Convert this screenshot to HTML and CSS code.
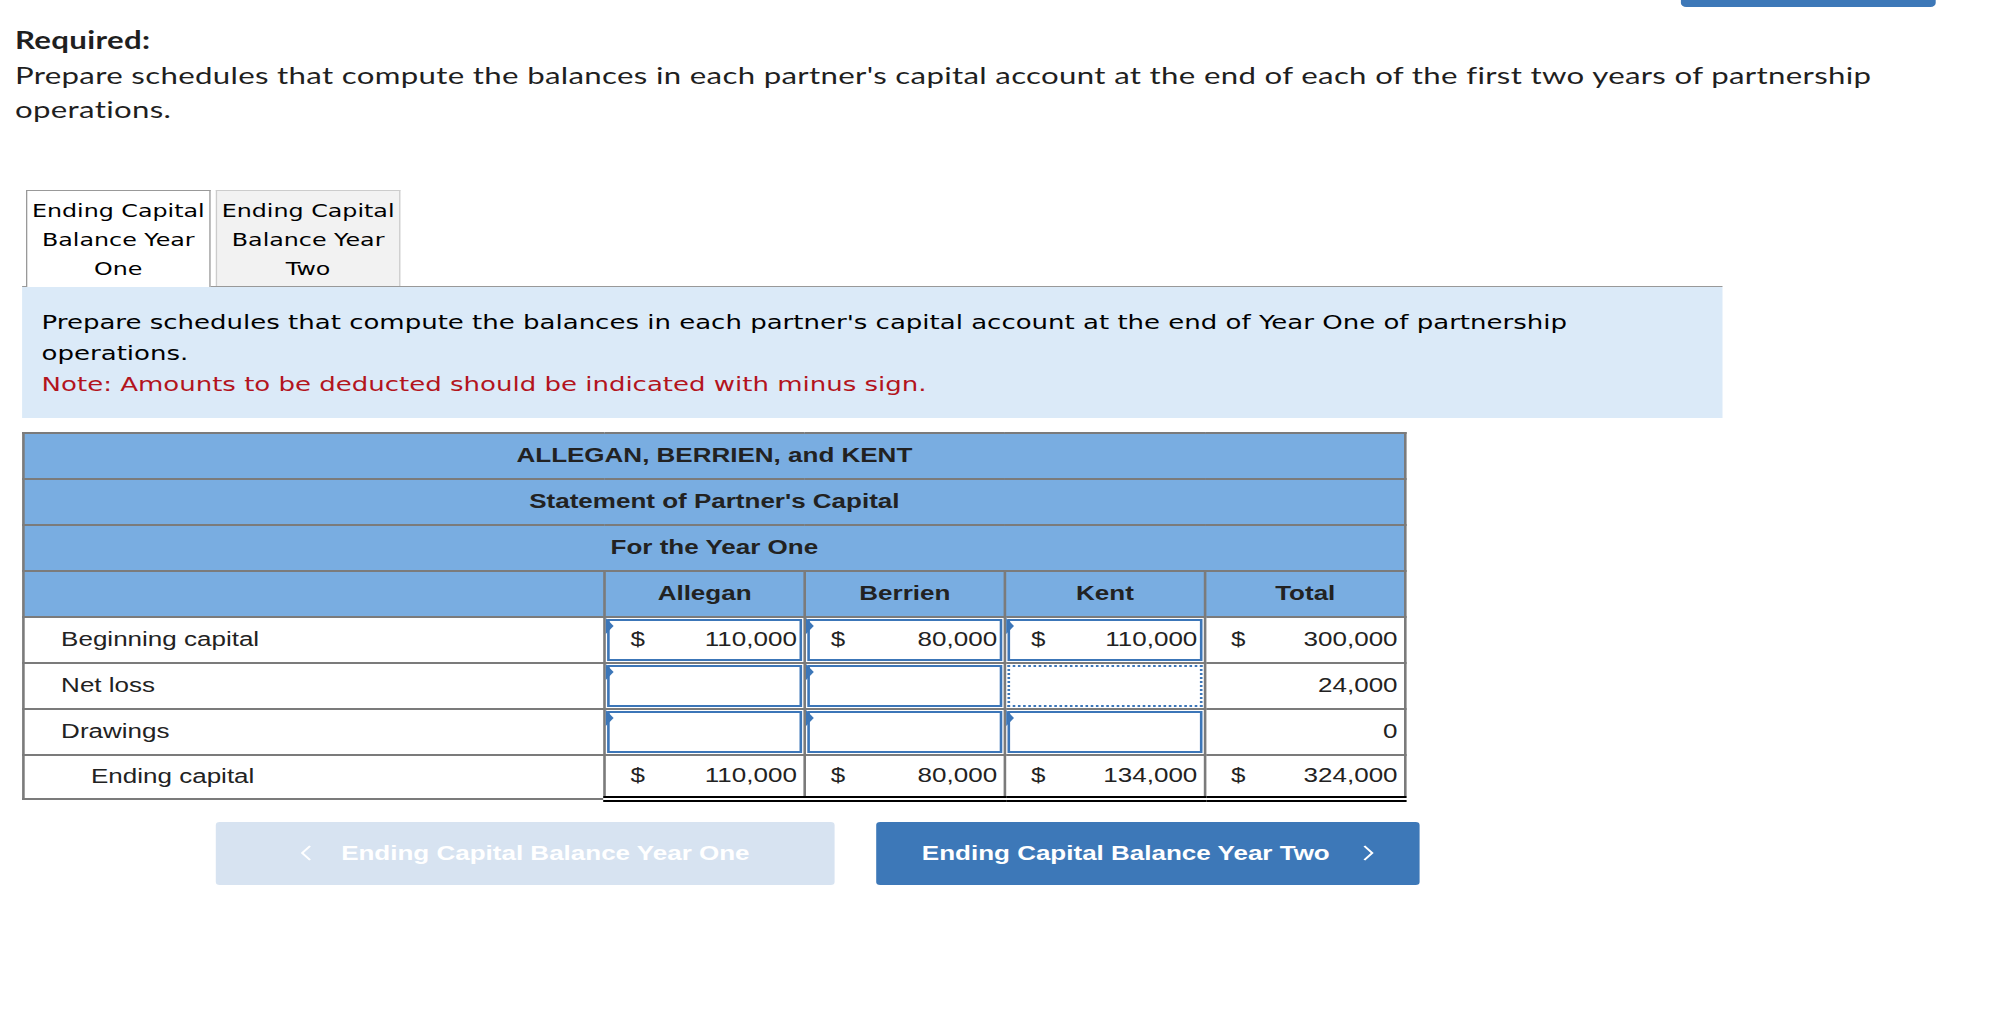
FILE: index.html
```html
<!DOCTYPE html>
<html>
<head>
<meta charset="utf-8">
<link rel="stylesheet" href="styles.css">
</head>
<body>
<div class="page">
  <div class="topbar"><span class="topbtn"></span></div>

  <div class="required">
    <strong class="req-title">Required:</strong>
    <p class="req-text">Prepare schedules that compute the balances in each partner's capital account at the end of each of the first two years of partnership operations.</p>
  </div>

  <div class="tabs">
    <div class="tab active">Ending Capital Balance Year One</div>
    <div class="tab">Ending Capital Balance Year Two</div>
  </div>

  <div class="info">
    <p>Prepare schedules that compute the balances in each partner's capital account at the end of Year One of partnership operations.</p>
    <p class="note">Note: Amounts to be deducted should be indicated with minus sign.</p>
  </div>

  <table class="stmt">
    <colgroup>
      <col class="c-label">
      <col class="c-num">
      <col class="c-num">
      <col class="c-num">
      <col class="c-num">
    </colgroup>
    <tr class="hrow"><th colspan="5">ALLEGAN, BERRIEN, and KENT</th></tr>
    <tr class="hrow"><th colspan="5">Statement of Partner's Capital</th></tr>
    <tr class="hrow"><th colspan="5">For the Year One</th></tr>
    <tr class="hrow"><th></th><th>Allegan</th><th>Berrien</th><th>Kent</th><th>Total</th></tr>
    <tr>
      <td class="lbl">Beginning capital</td>
      <td class="in"><div class="box"><span>$</span><span>110,000</span></div></td>
      <td class="in"><div class="box"><span>$</span><span>80,000</span></div></td>
      <td class="in"><div class="box"><span>$</span><span>110,000</span></div></td>
      <td class="num"><span>$</span><span>300,000</span></td>
    </tr>
    <tr>
      <td class="lbl">Net loss</td>
      <td class="in"><div class="box"></div></td>
      <td class="in"><div class="box"></div></td>
      <td class="in"><div class="box dotted"></div></td>
      <td class="num"><span></span><span>24,000</span></td>
    </tr>
    <tr>
      <td class="lbl">Drawings</td>
      <td class="in"><div class="box"></div></td>
      <td class="in"><div class="box"></div></td>
      <td class="in"><div class="box"></div></td>
      <td class="num"><span></span><span>0</span></td>
    </tr>
    <tr class="endrow">
      <td class="lbl indent">Ending capital</td>
      <td class="num tot"><span>$</span><span>110,000</span></td>
      <td class="num tot"><span>$</span><span>80,000</span></td>
      <td class="num tot"><span>$</span><span>134,000</span></td>
      <td class="num tot"><span>$</span><span>324,000</span></td>
    </tr>
  </table>

  <div class="navbtns">
    <button class="nav prev">
      <svg class="chev" width="9" height="16" viewBox="0 0 9 16"><polyline points="7.5,1 1.5,8 7.5,15" fill="none" stroke="#fff" stroke-width="1.8"/></svg>
      <span>Ending Capital Balance Year One</span>
    </button>
    <button class="nav next">
      <span>Ending Capital Balance Year Two</span>
      <svg class="chev" width="9" height="16" viewBox="0 0 9 16"><polyline points="1.5,1 7.5,8 1.5,15" fill="none" stroke="#fff" stroke-width="1.8"/></svg>
    </button>
  </div>
</div>
</body>
</html>
```

FILE: styles.css
```css
html, body {
  margin: 0;
  padding: 0;
  background: #fff;
  overflow: hidden;
}

.page {
  width: 1547px;
  transform: scaleX(1.3);
  transform-origin: 0 0;
}

.topbar {
  display: flex;
  justify-content: flex-end;
  padding-right: 58px;
  height: 7px;
}

.topbtn {
  display: block;
  width: 196px;
  height: 7px;
  background: #3d78b8;
  border-radius: 0 0 4px 4px;
}

.required {
  margin-top: 16px;
  padding-left: 11.5px;
  font-family: Lato, "Open Sans", sans-serif;
  font-size: 24px;
  letter-spacing: 0.25px;
  line-height: 34.5px;
  color: #1f1f1f;
}

.req-title {
  display: block;
  font-weight: 700;
}

.req-text {
  margin: 0;
  max-width: 1470px;
}

.tabs {
  display: flex;
  gap: 4px;
  margin-top: 63px;
  margin-left: 17px;
  width: 1308px;
  padding-left: 3px;
  box-sizing: border-box;
  border-bottom: 1px solid #999;
  font-family: "DejaVu Sans", Verdana, sans-serif;
  font-size: 18.3px;
  line-height: 29px;
  color: #000;
}

.tab {
  width: 142px;
  box-sizing: border-box;
  padding: 5px 2px 3px;
  text-align: center;
  background: #f2f2f2;
  border: 1px solid #ccc;
  border-bottom: none;
}

.tab.active {
  background: #fff;
  border-color: #999;
  margin-bottom: -1px;
  padding-bottom: 4px;
}

.info {
  margin-left: 17px;
  width: 1308px;
  box-sizing: border-box;
  padding: 20px 40px 18px 15px;
  background: #dbeaf8;
  font-family: "DejaVu Sans", Verdana, sans-serif;
  font-size: 20px;
  line-height: 31px;
  color: #000;
}

.info p {
  margin: 0;
}

.info .note {
  color: #b3141d;
}

.stmt {
  margin-top: 14px;
  margin-left: 17px;
  border-collapse: collapse;
  table-layout: fixed;
  width: 1062px;
  font-family: "Liberation Sans", Arial, sans-serif;
  font-size: 20px;
  color: #222;
}

.c-label { width: 447px; }
.c-num { width: 154px; }

.stmt th,
.stmt td {
  border: 2px solid #7b7b7b;
  height: 44px;
  padding: 0;
}

.hrow th {
  background: #79ade1;
  font-weight: 700;
  text-align: center;
}

.lbl {
  padding-left: 28px !important;
  text-align: left;
}

.lbl.indent {
  padding-left: 51px !important;
}

.num {
  padding: 0 5px 0 19px !important;
}

.num span:first-child {
  float: left;
}

.num span:last-child {
  float: right;
}

.box {
  position: relative;
  height: 38px;
  margin: 1px;
  border: 2px solid #3c76b8;
  display: flex;
  align-items: center;
  justify-content: space-between;
  padding: 0 2px 0 16px;
}

.box.dotted {
  border: 2px dotted #3c76b8;
}

.box::before {
  content: "";
  position: absolute;
  left: -3px;
  top: -3px;
  border-left: 6px solid #3c76b8;
  border-top: 8px solid transparent;
  border-bottom: 8px solid transparent;
}

.box.dotted::before {
  display: none;
}

.endrow td {
  height: 40px;
}

.endrow .tot {
  border-top: 2px solid #000;
  border-bottom: 6px double #000;
}

.navbtns {
  display: flex;
  gap: 32px;
  margin-top: 20px;
  margin-left: 166px;
}

.nav {
  display: flex;
  align-items: center;
  justify-content: center;
  gap: 22px;
  height: 63px;
  border: none;
  border-radius: 3px;
  font-family: "Liberation Sans", Arial, sans-serif;
  font-size: 20px;
  font-weight: 700;
  color: #fff;
  padding: 0;
}

.nav.prev {
  width: 476px;
  background: #d7e3f1;
}

.nav.next {
  width: 418px;
  background: #3d78b8;
  gap: 25px;
}

.chev {
  display: block;
}
```
